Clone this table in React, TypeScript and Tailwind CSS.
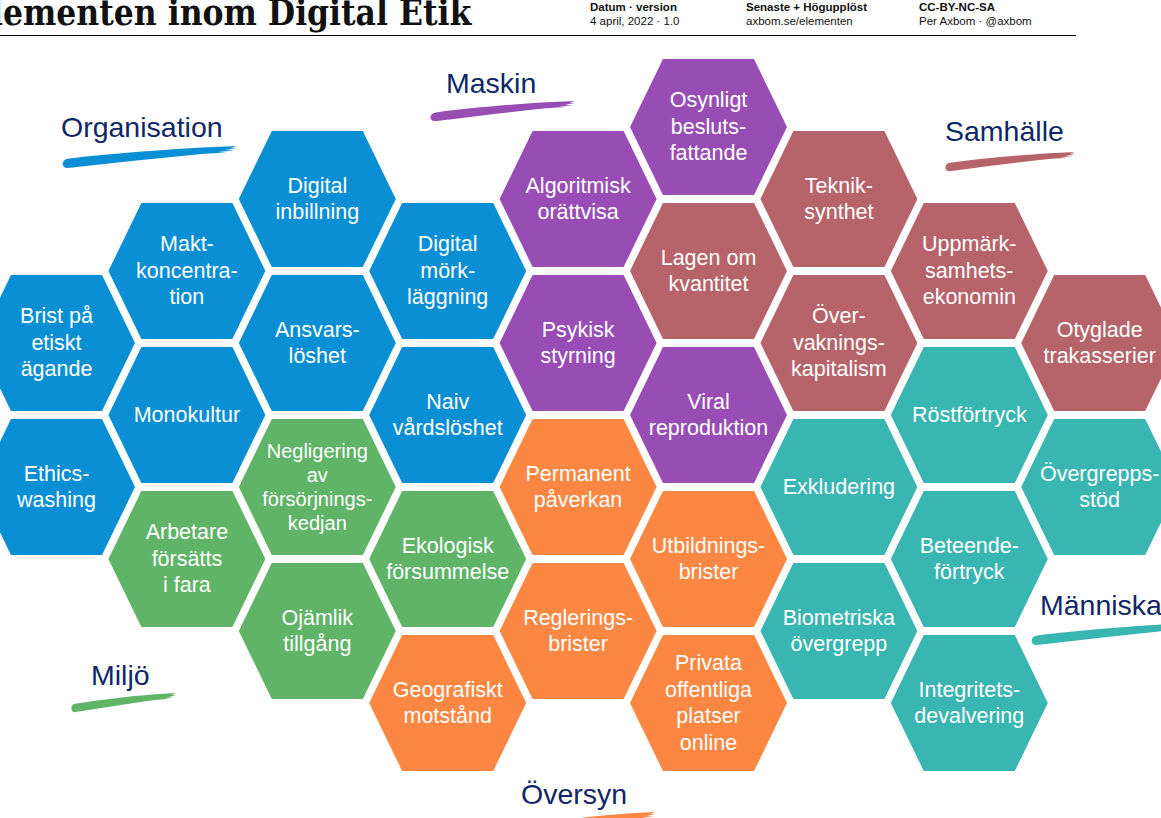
// Elementen inom Digital Etik — hexagon map of digital ethics topics.
// The hexes and category labels sit on a free canvas, so they are placed
// absolutely from their grid column/row; everything else flows.

type Tone = 'blue' | 'purple' | 'rose' | 'green' | 'orange' | 'teal'

interface Hex {
  c: number
  r: number
  lines: string[]
  tone: Tone
  small?: boolean
}

const TONE_CLASS: Record<Tone, string> = {
  blue: 'bg-[#0a8fd5]',
  purple: 'bg-[#984db5]',
  rose: 'bg-[#b6646a]',
  green: 'bg-[#5fb468]',
  orange: 'bg-[#fb8742]',
  teal: 'bg-[#39b6b2]',
}

const TONE_HEX: Record<Tone, string> = {
  blue: '#0a8fd5',
  purple: '#984db5',
  rose: '#b6646a',
  green: '#5fb468',
  orange: '#fb8742',
  teal: '#39b6b2',
}

// ─── Grid geometry ────────────────────────────────────────────────────────────

const HEX_W = 157
const HEX_H = 136
const COL_STEP = 130.4
const ROW_STEP = 144
const DIAGRAM_TOP = 36

function hexBox(c: number, r: number) {
  const cx = 56.5 + COL_STEP * c
  const cy = (c % 2 === 1 ? 127 : 199) + ROW_STEP * r
  return { left: cx - HEX_W / 2, top: cy - HEX_H / 2 - DIAGRAM_TOP }
}

const HEXES: Hex[] = [
  { c: 0, r: 1, tone: 'blue', lines: ['Brist på', 'etiskt', 'ägande'] },
  { c: 0, r: 2, tone: 'blue', lines: ['Ethics-', 'washing'] },

  { c: 1, r: 1, tone: 'blue', lines: ['Makt-', 'koncentra-', 'tion'] },
  { c: 1, r: 2, tone: 'blue', lines: ['Monokultur'] },
  { c: 1, r: 3, tone: 'green', lines: ['Arbetare', 'försätts', 'i fara'] },

  { c: 2, r: 0, tone: 'blue', lines: ['Digital', 'inbillning'] },
  { c: 2, r: 1, tone: 'blue', lines: ['Ansvars-', 'löshet'] },
  { c: 2, r: 2, tone: 'green', lines: ['Negligering', 'av', 'försörjnings-', 'kedjan'], small: true },
  { c: 2, r: 3, tone: 'green', lines: ['Ojämlik', 'tillgång'] },

  { c: 3, r: 1, tone: 'blue', lines: ['Digital', 'mörk-', 'läggning'] },
  { c: 3, r: 2, tone: 'blue', lines: ['Naiv', 'vårdslöshet'] },
  { c: 3, r: 3, tone: 'green', lines: ['Ekologisk', 'försummelse'] },
  { c: 3, r: 4, tone: 'orange', lines: ['Geografiskt', 'motstånd'] },

  { c: 4, r: 0, tone: 'purple', lines: ['Algoritmisk', 'orättvisa'] },
  { c: 4, r: 1, tone: 'purple', lines: ['Psykisk', 'styrning'] },
  { c: 4, r: 2, tone: 'orange', lines: ['Permanent', 'påverkan'] },
  { c: 4, r: 3, tone: 'orange', lines: ['Reglerings-', 'brister'] },

  { c: 5, r: 0, tone: 'purple', lines: ['Osynligt', 'besluts-', 'fattande'] },
  { c: 5, r: 1, tone: 'rose', lines: ['Lagen om', 'kvantitet'] },
  { c: 5, r: 2, tone: 'purple', lines: ['Viral', 'reproduktion'] },
  { c: 5, r: 3, tone: 'orange', lines: ['Utbildnings-', 'brister'] },
  { c: 5, r: 4, tone: 'orange', lines: ['Privata', 'offentliga', 'platser', 'online'] },

  { c: 6, r: 0, tone: 'rose', lines: ['Teknik-', 'synthet'] },
  { c: 6, r: 1, tone: 'rose', lines: ['Över-', 'vaknings-', 'kapitalism'] },
  { c: 6, r: 2, tone: 'teal', lines: ['Exkludering'] },
  { c: 6, r: 3, tone: 'teal', lines: ['Biometriska', 'övergrepp'] },

  { c: 7, r: 1, tone: 'rose', lines: ['Uppmärk-', 'samhets-', 'ekonomin'] },
  { c: 7, r: 2, tone: 'teal', lines: ['Röstförtryck'] },
  { c: 7, r: 3, tone: 'teal', lines: ['Beteende-', 'förtryck'] },
  { c: 7, r: 4, tone: 'teal', lines: ['Integritets-', 'devalvering'] },

  { c: 8, r: 1, tone: 'rose', lines: ['Otyglade', 'trakasserier'] },
  { c: 8, r: 2, tone: 'teal', lines: ['Övergrepps-', 'stöd'] },
]

// ─── Category labels (page coordinates of the text's top-left) ───────────────

interface Category {
  label: string
  x: number
  y: number
  tone: Tone
  stroke: { x: number; y: number; w: number; h: number }
}

const CATEGORIES: Category[] = [
  { label: 'Organisation', x: 61, y: 113, tone: 'blue', stroke: { x: 62, y: 145, w: 175, h: 24 } },
  { label: 'Maskin', x: 446, y: 69, tone: 'purple', stroke: { x: 430, y: 100, w: 145, h: 22 } },
  { label: 'Samhälle', x: 945, y: 117, tone: 'rose', stroke: { x: 945, y: 151, w: 130, h: 21 } },
  { label: 'Människa', x: 1040, y: 591, tone: 'teal', stroke: { x: 1031, y: 622, w: 165, h: 24 } },
  { label: 'Miljö', x: 91, y: 661, tone: 'green', stroke: { x: 71, y: 692, w: 105, h: 21 } },
  { label: 'Översyn', x: 521, y: 780, tone: 'orange', stroke: { x: 535, y: 811, w: 120, h: 22 } },
]

// ─── BrushStroke ──────────────────────────────────────────────────────────────
// Painted underline: rounded, heavier left end that thins and frays to the right.

function BrushStroke({ color }: { color: string }) {
  return (
    <svg viewBox="0 0 200 24" preserveAspectRatio="none" className="h-full w-full" aria-hidden="true">
      <path
        fill={color}
        d="M6,23 C2,23 0,20 1,17.5 C2,15 4,14 8,13.5 C50,9 110,5 160,2.5 L200,1 L192,3.2 L200,3.6 L186,5 L197,5.6 L178,7 L188,7.6 L160,9 C110,13 60,18 12,22.5 C10,22.8 8,23 6,23 Z"
      />
      <path fill={color} opacity="0.55" d="M120,5 L198,2.2 L196,2.8 L124,6.4 Z" />
    </svg>
  )
}

// ─── HexTile ──────────────────────────────────────────────────────────────────

function HexTile({ hex }: { hex: Hex }) {
  const { left, top } = hexBox(hex.c, hex.r)
  return (
    <div
      className={[
        'absolute flex h-[136px] w-[157px] flex-col items-center justify-center text-center text-white',
        '[clip-path:polygon(21%_0,79%_0,100%_50%,79%_100%,21%_100%,0_50%)]',
        hex.small ? 'text-[20px] leading-[24px]' : 'text-[21.5px] leading-[26.5px]',
        TONE_CLASS[hex.tone],
      ].join(' ')}
      style={{ left, top }}
    >
      {hex.lines.map((line) => (
        <span key={line} className="whitespace-nowrap">
          {line}
        </span>
      ))}
    </div>
  )
}

// ─── Header ───────────────────────────────────────────────────────────────────

function MetaColumn({ title, value, width }: { title: string; value: string; width: string }) {
  return (
    <div className={['shrink-0 text-[11.5px] leading-[14px] text-[#111]', width].join(' ')}>
      <p className="font-bold">{title}</p>
      <p>{value}</p>
    </div>
  )
}

function Header() {
  return (
    <header className="flex h-[36px] w-[1076px] border-b-[1.5px] border-black">
      <h1 className="-ml-[33px] -mt-[5px] w-[623px] shrink-0 whitespace-nowrap font-['DejaVu_Serif_Condensed','DejaVu_Serif',serif] text-[35px] font-bold leading-none text-[#111] [font-stretch:semi-condensed]">
        Elementen inom Digital Etik
      </h1>
      <MetaColumn title="Datum · version" value="4 april, 2022 · 1.0" width="w-[156px]" />
      <MetaColumn title="Senaste + Högupplöst" value="axbom.se/elementen" width="w-[173px]" />
      <MetaColumn title="CC-BY-NC-SA" value="Per Axbom · @axbom" width="w-[150px]" />
    </header>
  )
}

// ─── App ──────────────────────────────────────────────────────────────────────

export default function App() {
  return (
    <div className="relative h-[818px] w-[1161px] overflow-hidden bg-white font-['Liberation_Sans',Arial,sans-serif]">
      <Header />

      <section className="relative h-[782px]">
        {HEXES.map((hex) => (
          <HexTile key={hex.lines.join('')} hex={hex} />
        ))}

        {CATEGORIES.map((cat) => (
          <div key={cat.label}>
            <div
              className="absolute"
              style={{
                left: cat.stroke.x,
                top: cat.stroke.y - DIAGRAM_TOP,
                width: cat.stroke.w,
                height: cat.stroke.h,
              }}
            >
              <BrushStroke color={TONE_HEX[cat.tone]} />
            </div>
            <p
              className="absolute whitespace-nowrap text-[28.5px] leading-none text-[#0f2766]"
              style={{ left: cat.x, top: cat.y - DIAGRAM_TOP }}
            >
              {cat.label}
            </p>
          </div>
        ))}
      </section>
    </div>
  )
}
